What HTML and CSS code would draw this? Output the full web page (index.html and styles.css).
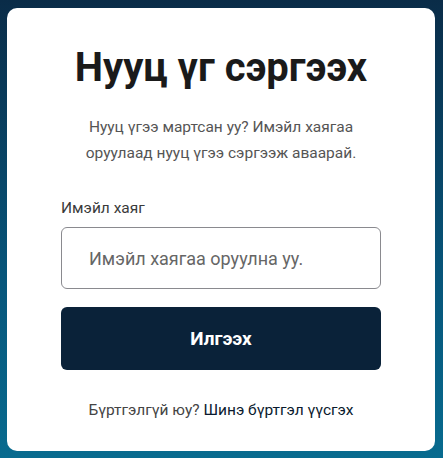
FILE: index.html
```html
<!DOCTYPE html>
<html lang="mn">
<head>
<meta charset="utf-8">
<title>Нууц үг сэргээх</title>
<link rel="stylesheet" href="styles.css">
</head>
<body>
  <main class="card">
    <h1 class="title">Нууц үг сэргээх</h1>
    <p class="lead">Нууц үгээ мартсан уу? Имэйл хаягаа<br>оруулаад нууц үгээ сэргээж аваарай.</p>
    <form class="form">
      <label class="label" for="email">Имэйл хаяг</label>
      <input class="input" id="email" type="email" placeholder="Имэйл хаягаа оруулна уу.">
      <button class="submit" type="button">Илгээх</button>
    </form>
    <p class="footer">Бүртгэлгүй юу? <a class="link" href="#">Шинэ бүртгэл үүсгэх</a></p>
  </main>
</body>
</html>
```
FILE: styles.css
```css
* {
  box-sizing: border-box;
}

html, body {
  height: 100%;
}

body {
  margin: 0;
  padding: 8px 8px 7px 7px;
  display: flex;
  background: linear-gradient(to bottom, #0a2c48 0%, #07557a 60%, #086b8f 100%);
  font-family: Roboto, "Noto Sans", sans-serif;
}

.card {
  flex: 1;
  display: flex;
  flex-direction: column;
  background: #ffffff;
  border-radius: 10px;
  padding: 36px 54px 0;
}

.title {
  margin: 0;
  font-size: 40px;
  line-height: 48px;
  font-weight: 700;
  color: #1a1a1a;
  text-align: center;
}

.lead {
  margin: 22px 0 0;
  font-size: 15.5px;
  line-height: 26px;
  color: #555555;
  text-align: center;
}

.form {
  display: flex;
  flex-direction: column;
  margin-top: 32px;
}

.label {
  font-size: 15.5px;
  line-height: 20px;
  color: #3a3a3a;
}

.input {
  margin-top: 9px;
  height: 62px;
  padding: 0 27px;
  border: 1px solid #8a8a8f;
  border-radius: 6px;
  font-family: inherit;
  font-size: 18px;
  color: #222222;
  background: #ffffff;
  outline: none;
}

.input::placeholder {
  color: #666666;
}

.submit {
  margin-top: 18px;
  height: 63px;
  border: 0;
  border-radius: 6px;
  background: #0a2239;
  color: #ffffff;
  font-family: inherit;
  font-size: 19px;
  font-weight: 700;
  cursor: pointer;
}

.footer {
  margin: 30px 0 0;
  font-size: 15.5px;
  line-height: 20px;
  color: #444444;
  text-align: center;
}

.link {
  color: #0a1a2e;
  text-decoration: none;
}
```
